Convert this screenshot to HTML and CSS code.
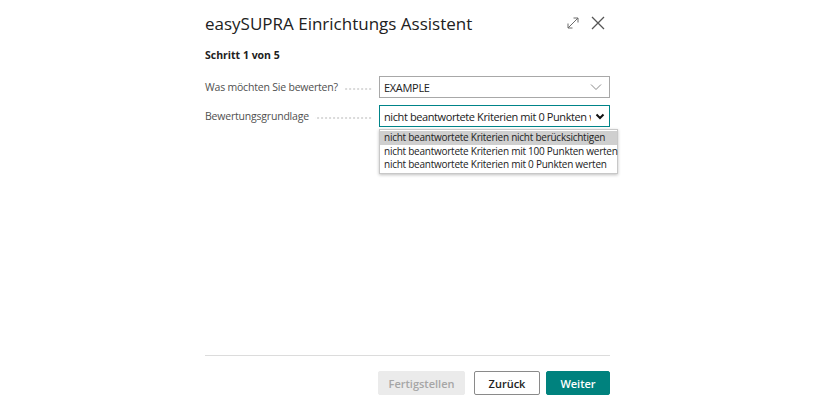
FILE: index.html
```html
<!DOCTYPE html>
<html lang="de">
<head>
<meta charset="utf-8">
<title>easySUPRA Einrichtungs Assistent</title>
<link rel="stylesheet" href="styles.css">
</head>
<body>
<div class="dialog">
  <div class="header">
    <h1 class="title">easySUPRA Einrichtungs Assistent</h1>
    <div class="header-icons">
      <svg class="icon" width="14" height="14" viewBox="0 0 14 14" fill="none" stroke="#6b6b6b" stroke-width="1">
        <path d="M2 12 L12 2"/>
        <path d="M7.5 2 H12 V6.5"/>
        <path d="M2 7.5 V12 H6.5"/>
      </svg>
      <svg class="icon" width="16" height="16" viewBox="0 0 16 16" fill="none" stroke="#555" stroke-width="1.3">
        <path d="M2 2 L14 14 M14 2 L2 14"/>
      </svg>
    </div>
  </div>
  <div class="step">Schritt 1 von 5</div>
  <div class="form">
    <div class="row">
      <div class="label"><span>Was möchten Sie bewerten?</span><span class="leader"></span></div>
      <div class="field">
        <span class="value">EXAMPLE</span>
        <svg class="chev-light" width="12" height="8" viewBox="0 0 12 8" fill="none" stroke="#8a8a8a" stroke-width="1"><path d="M1 1.5 L6 6.5 L11 1.5"/></svg>
      </div>
    </div>
    <div class="row">
      <div class="label"><span>Bewertungsgrundlage</span><span class="leader"></span></div>
      <div class="field field-active">
        <span class="value value-clip">nicht beantwortete Kriterien mit 0 Punkten werten</span>
        <svg class="chev-dark" width="10" height="7" viewBox="0 0 10 7" fill="none" stroke="#111" stroke-width="2"><path d="M1.5 1.5 L5 5 L8.5 1.5"/></svg>
        <ul class="options">
          <li class="option selected">nicht beantwortete Kriterien nicht berücksichtigen</li>
          <li class="option">nicht beantwortete Kriterien mit 100 Punkten werten</li>
          <li class="option">nicht beantwortete Kriterien mit 0 Punkten werten</li>
        </ul>
      </div>
    </div>
  </div>
  <div class="footer">
    <button class="btn btn-disabled">Fertigstellen</button>
    <button class="btn btn-secondary">Zurück</button>
    <button class="btn btn-primary">Weiter</button>
  </div>
</div>
</body>
</html>
```

FILE: styles.css
```css
* { box-sizing: border-box; }
html, body { margin: 0; padding: 0; background: #fff; }
body {
  width: 816px;
  height: 412px;
  font-family: "Open Sans", "Noto Sans", sans-serif;
  color: #212121;
}
.dialog {
  margin-left: 205px;
  width: 405px;
  height: 412px;
  display: flex;
  flex-direction: column;
}
.header {
  display: flex;
  align-items: center;
  justify-content: space-between;
  padding-top: 13px;
  height: 35px;
}
.title {
  margin: 0;
  font-size: 17px;
  font-weight: 400;
  line-height: 22px;
  color: #212121;
}
.header-icons {
  display: flex;
  align-items: center;
  gap: 10px;
  margin-right: 4px;
  margin-top: -3px;
}
.icon { display: block; }
.step {
  margin-top: 13px;
  font-size: 10.5px;
  font-weight: 700;
  line-height: 14px;
  color: #212121;
}
.form {
  margin-top: 14px;
  display: flex;
  flex-direction: column;
  gap: 7px;
}
.row {
  display: grid;
  grid-template-columns: 174px 231px;
  align-items: center;
  height: 22px;
}
.label {
  display: flex;
  align-items: center;
  font-size: 10.5px;
  letter-spacing: -0.2px;
  color: #505050;
  padding-right: 7px;
  white-space: nowrap;
}
.leader {
  flex: 1;
  margin-left: 6px;
  margin-top: 3px;
  height: 2px;
  background-image: radial-gradient(circle, #c6c6c6 0.6px, transparent 0.9px);
  background-size: 4px 2px;
  background-position: right center;
  background-repeat: repeat-x;
}
.field {
  position: relative;
  height: 22px;
  border: 1px solid #a8a8a8;
  display: flex;
  align-items: center;
  padding: 0 4px 0 4px;
  background: #fff;
}
.field-active { border-color: #008489; }
.value {
  flex: 1;
  font-size: 11px;
  letter-spacing: -0.3px;
  color: #212121;
  white-space: nowrap;
  overflow: hidden;
}
.value-clip { text-overflow: clip; letter-spacing: -0.4px; }
.chev-light { flex: none; margin-left: 4px; margin-right: 3px; }
.chev-dark { flex: none; margin-left: 4px; }
.options {
  position: absolute;
  left: -1px;
  top: 23px;
  margin: 0;
  padding: 1px 0;
  list-style: none;
  width: 239px;
  background: #fff;
  border: 1px solid #c8c8c8;
  box-shadow: 0 1px 3px rgba(0,0,0,0.25);
  z-index: 2;
}
.option {
  font-size: 10px;
  letter-spacing: -0.25px;
  line-height: 13.5px;
  padding: 0 4px;
  color: #222;
  white-space: nowrap;
}
.option.selected { background: #cfcfcf; }
.footer {
  margin-top: auto;
  margin-bottom: 17px;
  border-top: 1px solid #dcdcdc;
  padding-top: 15px;
  display: flex;
  justify-content: flex-end;
  gap: 6px;
}
.btn {
  height: 24px;
  font-family: inherit;
  font-size: 11px;
  font-weight: 600;
  border-radius: 2px;
  padding: 0;
  cursor: pointer;
}
.btn-disabled {
  width: 87px;
  margin-right: 3px;
  background: #ebebeb;
  border: 1px solid #ebebeb;
  color: #a6a6a6;
}
.btn-secondary {
  width: 66px;
  background: #fff;
  border: 1px solid #8a8a8a;
  color: #212121;
}
.btn-primary {
  width: 64px;
  background: #00827e;
  border: 1px solid #00827e;
  color: #fff;
}
```
